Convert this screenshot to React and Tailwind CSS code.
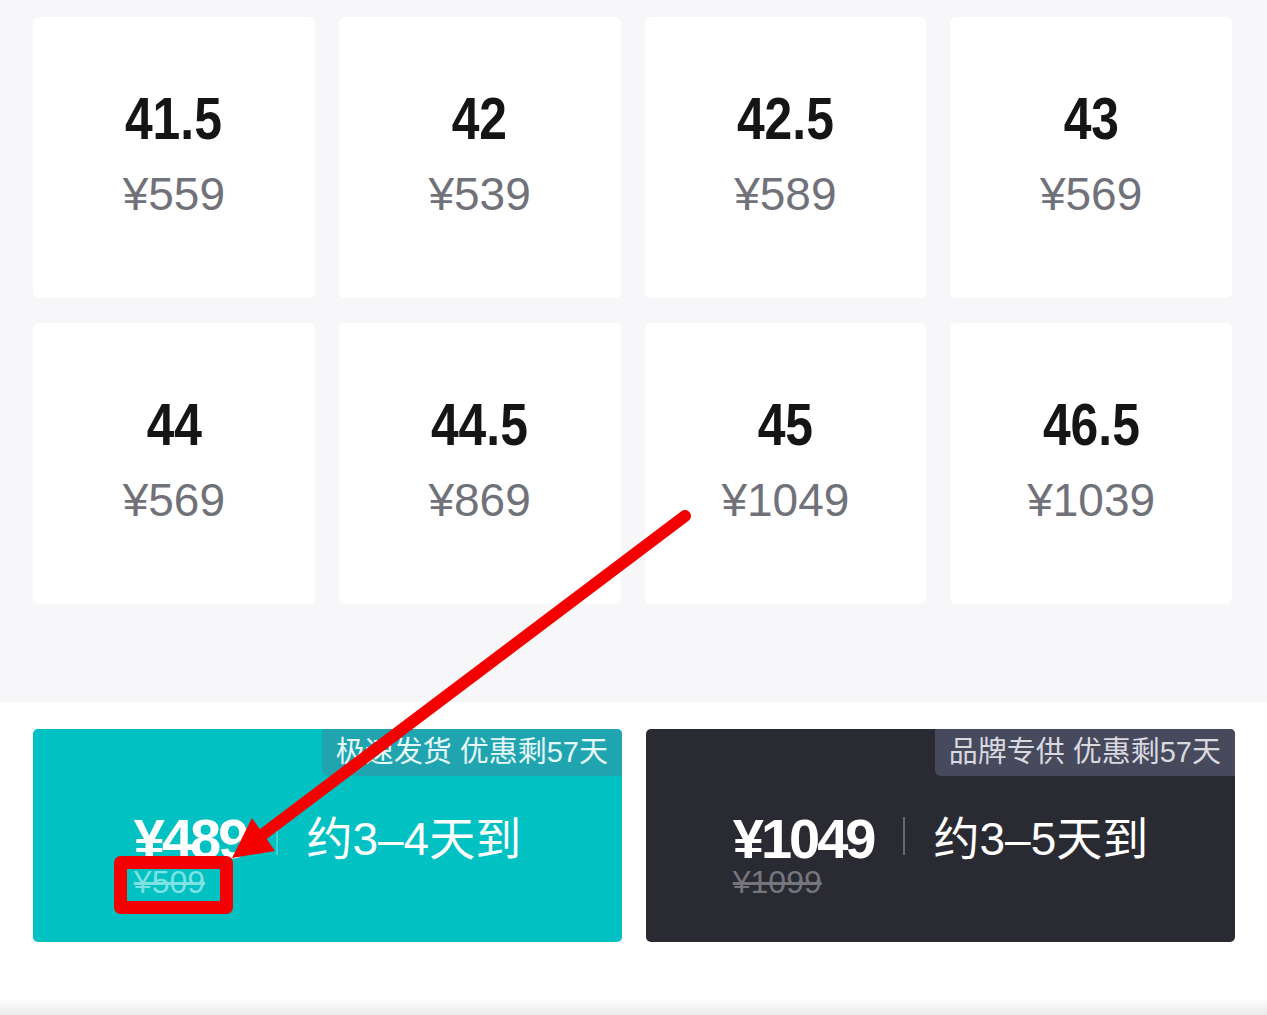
const sizes = [
  { size: '41.5', price: '¥559' },
  { size: '42', price: '¥539' },
  { size: '42.5', price: '¥589' },
  { size: '43', price: '¥569' },
  { size: '44', price: '¥569' },
  { size: '44.5', price: '¥869' },
  { size: '45', price: '¥1049' },
  { size: '46.5', price: '¥1039' },
]

const numFont = "font-['Liberation_Sans',Arial,sans-serif]"

const SizeCard = ({ size, price }) => (
  <div className="h-[281px] bg-white rounded-[6px] flex flex-col items-center pt-[72px]">
    <div className={`${numFont} text-[60px] leading-none font-bold text-[#151518] scale-x-[0.83]`}>{size}</div>
    <div className={`${numFont} text-[46px] leading-none text-[#71717a] mt-[22px]`}>{price}</div>
  </div>
)

const BuyButton = ({ theme, tag, price, oldPrice, days }) => {
  const teal = theme === 'teal'
  return (
    <div className={`relative h-[213px] rounded-[5px] flex justify-center pt-[84px] ${teal ? 'bg-[#02c1c3]' : 'bg-[#2a2a33]'}`}>
      <div className={`absolute top-0 right-0 h-[47px] px-[14px] rounded-bl-[6px] rounded-tr-[5px] flex items-center text-[29px] leading-none font-['Liberation_Sans','Noto_Sans_CJK_SC',sans-serif] ${teal ? 'bg-[#1fa4b0] text-[#e8f9f9]' : 'bg-[#474a5d] text-[#d9d9e0]'}`}>
        {tag}
      </div>
      <div className="flex items-start">
        <div className="flex flex-col">
          <div className={`${numFont} text-[56px] leading-[52px] font-bold text-white tracking-[-3px]`}>{price}</div>
          <div className={`${numFont} text-[32px] leading-none line-through mt-[1px] ${teal ? 'text-[#7fe2e2]' : 'text-[#75757e]'}`}>{oldPrice}</div>
        </div>
        <div className={`w-[2px] h-[38px] mt-[4px] ml-[30px] mr-[28px] ${teal ? 'bg-[#3fd3d4]' : 'bg-[#686870]'}`} />
        <div className="font-['Liberation_Sans','Noto_Sans_CJK_SC',sans-serif] text-[46px] leading-none text-white mt-[3px]">{days}</div>
      </div>
    </div>
  )
}

export default function App() {
  return (
    <div className="relative w-[1267px] h-[1015px] bg-white overflow-hidden">
      <section className="bg-[#f7f7f9] h-[702px] pl-[33px] pr-[35px] pt-[17px]">
        <div className="grid grid-cols-4 gap-x-[24px] gap-y-[25px]">
          {sizes.map((s) => (
            <SizeCard key={s.size} {...s} />
          ))}
        </div>
      </section>

      <section className="pl-[33px] pr-[32px] pt-[27px] h-[296px]">
        <div className="grid grid-cols-2 gap-[24px]">
          <BuyButton theme="teal" tag="极速发货 优惠剩57天" price="¥489" oldPrice="¥509" days="约3–4天到" />
          <BuyButton theme="dark" tag="品牌专供 优惠剩57天" price="¥1049" oldPrice="¥1099" days="约3–5天到" />
        </div>
      </section>
      <div className="h-[17px] bg-gradient-to-b from-white to-[#eaeaea]" />

      {/* annotation */}
      <svg className="absolute inset-0 pointer-events-none" width="1267" height="1015" viewBox="0 0 1267 1015">
        <line x1="685" y1="516" x2="262" y2="835" stroke="#f50000" strokeWidth="12" strokeLinecap="round" />
        <polygon points="232,858 252,818 275,851" fill="#f50000" />
        <rect x="120.5" y="862.5" width="106" height="45" fill="none" stroke="#f50000" strokeWidth="13" strokeLinejoin="round" />
      </svg>
    </div>
  )
}
